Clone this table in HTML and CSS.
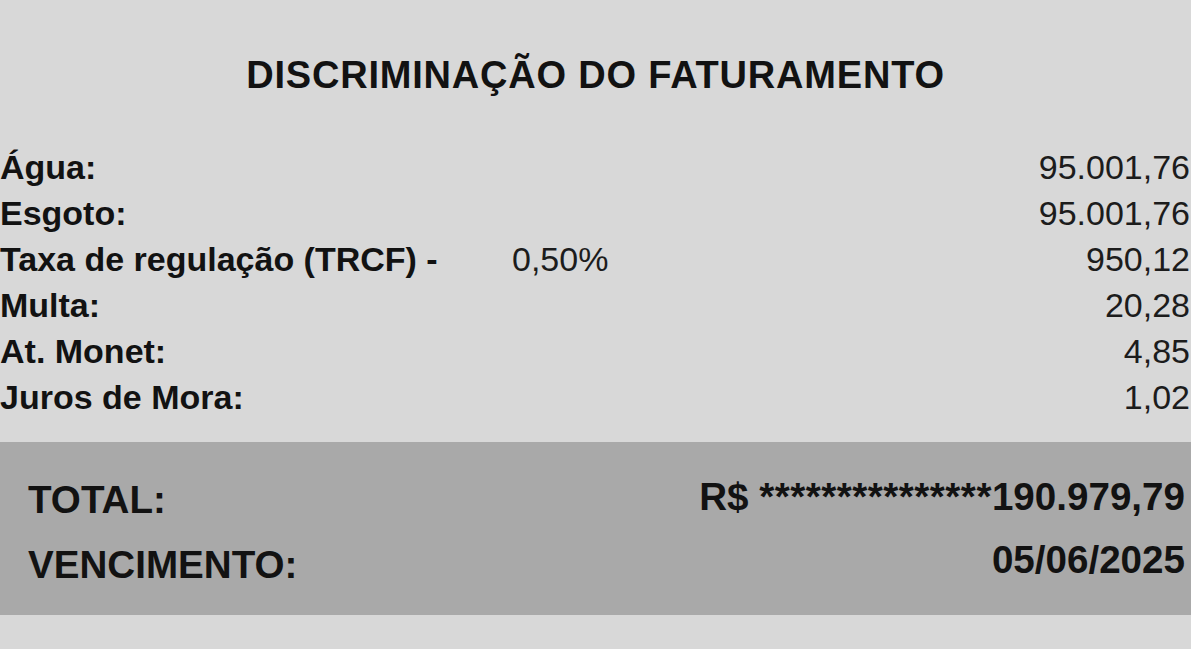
FILE: index.html
```html
<!DOCTYPE html>
<html lang="pt-BR">
<head>
<meta charset="utf-8">
<title>Discriminação do Faturamento</title>
<link rel="stylesheet" href="styles.css">
</head>
<body>
<main class="sheet">
  <h1 class="title">DISCRIMINAÇÃO DO FATURAMENTO</h1>
  <section class="items">
    <div class="row"><span class="label">Água:</span><span class="rate"></span><span class="value">95.001,76</span></div>
    <div class="row"><span class="label">Esgoto:</span><span class="rate"></span><span class="value">95.001,76</span></div>
    <div class="row"><span class="label">Taxa de regulação (TRCF) -</span><span class="rate">0,50%</span><span class="value">950,12</span></div>
    <div class="row"><span class="label">Multa:</span><span class="rate"></span><span class="value">20,28</span></div>
    <div class="row"><span class="label">At. Monet:</span><span class="rate"></span><span class="value">4,85</span></div>
    <div class="row"><span class="label">Juros de Mora:</span><span class="rate"></span><span class="value">1,02</span></div>
  </section>
  <section class="totals">
    <div class="totals-labels">
      <div class="total-line">TOTAL:</div>
      <div class="total-line">VENCIMENTO:</div>
    </div>
    <div class="totals-values">
      <div class="total-line">R$ <span class="stars">***************</span>190.979,79</div>
      <div class="total-line">05/06/2025</div>
    </div>
  </section>
</main>
</body>
</html>
```
FILE: styles.css
```css
html, body {
  margin: 0;
  padding: 0;
}
body {
  background: #d8d8d8;
  color: #121212;
  font-family: "Liberation Sans", Arial, sans-serif;
  width: 1191px;
  height: 649px;
  overflow: hidden;
}
.sheet {
  display: flex;
  flex-direction: column;
}
.title {
  margin: 53px 0 0 0;
  font-size: 38px;
  line-height: 44px;
  font-weight: 700;
  text-align: center;
  letter-spacing: 0.8px;
}
.items {
  display: flex;
  flex-direction: column;
  margin-top: 47px;
  padding-right: 1px;
}
.row {
  display: grid;
  grid-template-columns: 512px 1fr auto;
  font-size: 34px;
  line-height: 46px;
}
.label {
  font-weight: 700;
}
.rate, .value {
  font-weight: 400;
  color: #1c1c1c;
}
.value {
  text-align: right;
}
.totals {
  margin-top: 22px;
  height: 173px;
  background: #a9a9a9;
  display: flex;
  justify-content: space-between;
  align-items: flex-start;
  padding: 0 6px 0 28px;
  font-size: 38.6px;
  font-weight: 700;
}
.totals-labels {
  padding-top: 25px;
  line-height: 65px;
}
.totals-values {
  padding-top: 23px;
  line-height: 63px;
  text-align: right;
}
.stars {
  letter-spacing: 0.5px;
}
```
